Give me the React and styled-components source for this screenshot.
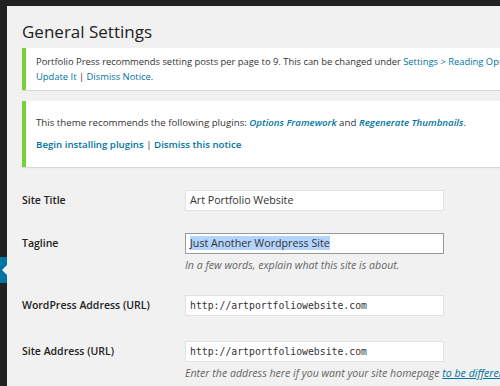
import React from 'react';
import styled, { createGlobalStyle } from 'styled-components';

const GlobalStyle = createGlobalStyle`
  html, body {
    margin: 0;
    padding: 0;
    background: #f1f1f1;
    overflow: hidden;
  }
  body {
    font-family: 'Open Sans', 'Liberation Sans', sans-serif;
    color: #444;
  }
`

const Page = styled.div`
  display: flex;
  flex-direction: column;
  width: 500px;
  height: 386px;
  overflow: hidden;
`

const TopBar = styled.div`
  height: 6px;
  flex-shrink: 0;
  background: #222;
`

const Body = styled.div`
  display: flex;
  flex: 1;
`

const Sidebar = styled.div`
  width: 7px;
  flex-shrink: 0;
  background: #222;
  padding-top: 251px;
`

const CurrentItem = styled.div`
  position: relative;
  height: 26px;
  background: #0074a2;

  &::after {
    content: '';
    position: absolute;
    right: 0;
    top: 8px;
    border-style: solid;
    border-width: 5px 5px 5px 0;
    border-color: transparent #f1f1f1 transparent transparent;
  }
`

const Wrap = styled.div`
  width: 640px;
  flex-shrink: 0;
  padding: 14px 0 0 15px;
`

const Heading = styled.h2`
  margin: 0 0 5px;
  font-size: 17px;
  line-height: 23px;
  font-weight: 400;
  color: #222;
`

const Notice = styled.div`
  background: #fff;
  border-left: 4px solid #7ad03a;
  box-shadow: 0 1px 1px rgba(0, 0, 0, 0.1);
  padding: ${p => p.$roomy ? '14px 10px 15px' : '6px 10px 6px'};
  margin-bottom: 11px;
  font-size: ${p => p.$roomy ? '9.7px' : '9.4px'};
  line-height: 15px;
  color: #333;
  white-space: nowrap;
`

const NoticeLine = styled.p`
  margin: 0 0 ${p => p.$gap || 0}px;
`

const Link = styled.a`
  color: #0074a2;
  text-decoration: none;
  font-weight: ${p => p.$strong ? 600 : 400};
  font-style: ${p => p.$italic ? 'italic' : 'normal'};
`

const Form = styled.div`
  display: grid;
  grid-template-columns: 163px 259px;
  row-gap: 22px;
  padding-top: 12px;
`

const Label = styled.label`
  margin-top: ${p => p.$push || 0}px;
  font-size: 10.5px;
  font-weight: 600;
  line-height: 21px;
  color: #222;
`

const Field = styled.div`
  display: flex;
  flex-direction: column;
  gap: 4px;
  margin-top: ${p => p.$push || 0}px;
`

const Input = styled.div`
  box-sizing: border-box;
  height: 21px;
  background: #fff;
  border: 1px solid ${p => p.$focused ? '#999' : '#e2e2e2'};
  padding: 0 4px;
  font-family: ${p => p.$mono ? "'DejaVu Sans Mono', 'Liberation Mono', monospace" : "'Open Sans', 'Liberation Sans', sans-serif"};
  font-size: ${p => p.$mono ? '9.8px' : '10.7px'};
  line-height: 19px;
  color: #333;
  white-space: nowrap;
`

const Selected = styled.span`
  background: #b3d4fc;
`

const Description = styled.p`
  margin: 0;
  font-size: 10.6px;
  line-height: 15px;
  font-style: italic;
  color: #666;
  white-space: nowrap;
`

const Underlined = styled.a`
  color: #0074a2;
  text-decoration: underline;
`

export default function App() {
  return (
    <Page>
      <GlobalStyle />
      <TopBar />
      <Body>
        <Sidebar>
          <CurrentItem />
        </Sidebar>
        <Wrap>
          <Heading>General Settings</Heading>
          <Notice>
            <NoticeLine>
              Portfolio Press recommends setting posts per page to 9. This can be changed under{' '}
              <Link>Settings &gt; Reading Options</Link>.
            </NoticeLine>
            <NoticeLine>
              <Link>Update It</Link> | <Link>Dismiss Notice</Link>.
            </NoticeLine>
          </Notice>
          <Notice $roomy>
            <NoticeLine $gap={7}>
              This theme recommends the following plugins:{' '}
              <Link $strong $italic>Options Framework</Link> and{' '}
              <Link $strong $italic>Regenerate Thumbnails</Link>.
            </NoticeLine>
            <NoticeLine>
              <Link $strong>Begin installing plugins</Link> | <Link $strong>Dismiss this notice</Link>
            </NoticeLine>
          </Notice>
          <Form>
            <Label>Site Title</Label>
            <Field>
              <Input>Art Portfolio Website</Input>
            </Field>
            <Label>Tagline</Label>
            <Field>
              <Input $focused><Selected>Just Another Wordpress Site</Selected></Input>
              <Description>In a few words, explain what this site is about.</Description>
            </Field>
            <Label>WordPress Address (URL)</Label>
            <Field>
              <Input $mono>http://artportfoliowebsite.com</Input>
            </Field>
            <Label $push={3}>Site Address (URL)</Label>
            <Field $push={3}>
              <Input $mono>http://artportfoliowebsite.com</Input>
              <Description>
                Enter the address here if you want your site homepage <Underlined>to be different from the directory</Underlined>
              </Description>
            </Field>
          </Form>
        </Wrap>
      </Body>
    </Page>
  );
}
